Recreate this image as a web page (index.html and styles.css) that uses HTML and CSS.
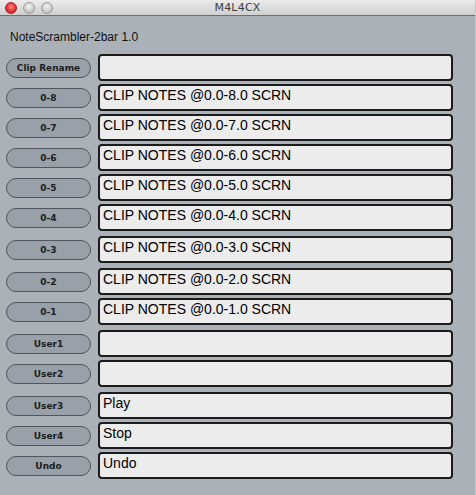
FILE: index.html
```html
<!DOCTYPE html>
<html>
<head>
<meta charset="utf-8">
<link rel="stylesheet" href="styles.css">
</head>
<body>
<div class="window">
  <div class="titlebar">
    <div class="lights">
      <span class="light light--close"></span>
      <span class="light"></span>
      <span class="light"></span>
    </div>
    <div class="title">M4L4CX</div>
  </div>
  <div class="content">
    <div class="header">NoteScrambler-2bar 1.0</div>
    <div class="rows">
      <div class="row"><span class="pill">Clip Rename</span><div class="field"></div></div>
      <div class="row"><span class="pill">0-8</span><div class="field">CLIP NOTES @0.0-8.0 SCRN</div></div>
      <div class="row"><span class="pill">0-7</span><div class="field">CLIP NOTES @0.0-7.0 SCRN</div></div>
      <div class="row"><span class="pill">0-6</span><div class="field">CLIP NOTES @0.0-6.0 SCRN</div></div>
      <div class="row"><span class="pill">0-5</span><div class="field">CLIP NOTES @0.0-5.0 SCRN</div></div>
      <div class="row"><span class="pill">0-4</span><div class="field">CLIP NOTES @0.0-4.0 SCRN</div></div>
      <div class="row row--wide"><span class="pill">0-3</span><div class="field">CLIP NOTES @0.0-3.0 SCRN</div></div>
      <div class="row row--wide"><span class="pill">0-2</span><div class="field">CLIP NOTES @0.0-2.0 SCRN</div></div>
      <div class="row"><span class="pill">0-1</span><div class="field">CLIP NOTES @0.0-1.0 SCRN</div></div>
      <div class="row row--wide"><span class="pill">User1</span><div class="field"></div></div>
      <div class="row"><span class="pill">User2</span><div class="field"></div></div>
      <div class="row row--wide"><span class="pill">User3</span><div class="field">Play</div></div>
      <div class="row"><span class="pill">User4</span><div class="field">Stop</div></div>
      <div class="row"><span class="pill">Undo</span><div class="field">Undo</div></div>
    </div>
  </div>
</div>
</body>
</html>
```
FILE: styles.css
```css
html, body {
  margin: 0;
  padding: 0;
  background: #aab1b9;
}
.window {
  width: 476px;
  height: 495px;
  background: #aab1b9;
  overflow: hidden;
  box-sizing: border-box;
  border-right: 1px solid #c3c8cd;
  font-family: "Liberation Sans", Arial, sans-serif;
}
.titlebar {
  height: 15px;
  border-bottom: 1px solid #6e6e6e;
  background: linear-gradient(#ececec, #cfcfcf);
  display: flex;
  align-items: center;
  position: relative;
}
.lights {
  display: flex;
  gap: 6px;
  padding-left: 5px;
}
.light {
  width: 12px;
  height: 12px;
  border-radius: 50%;
  box-sizing: border-box;
  border: 1px solid #9c9c9c;
  background: radial-gradient(circle at 50% 35%, #f4f4f4, #c2c2c2 70%);
}
.light--close {
  border-color: #a8282a;
  background: radial-gradient(circle at 50% 40%, #ff8a8a, #e0282c 60%, #b8171c);
}
.title {
  position: absolute;
  left: 0;
  right: 0;
  top: 1px;
  text-align: center;
  font-family: "DejaVu Sans", sans-serif;
  font-size: 11px;
  color: #3c3c3c;
  line-height: 13px;
  letter-spacing: 0.2px;
}
.content {
  padding: 0 0 0 6px;
}
.header {
  padding: 14px 0 0 4px;
  height: 14px;
  line-height: 14px;
  font-size: 12px;
  color: #111;
  margin-bottom: 10px;
}
.rows {
  display: flex;
  flex-direction: column;
  gap: 3px;
}
.row {
  display: flex;
  align-items: center;
  gap: 7px;
  height: 27px;
}
.row--wide {
  margin-top: 2px;
}
.pill {
  width: 85px;
  height: 20px;
  box-sizing: border-box;
  border: 1px solid #50565d;
  border-radius: 10px;
  background: #98a0a9;
  font-family: "DejaVu Sans", sans-serif;
  font-weight: bold;
  font-size: 9px;
  color: #1c1c1c;
  display: flex;
  align-items: center;
  justify-content: center;
}
.field {
  width: 355px;
  height: 27px;
  box-sizing: border-box;
  border: 2px solid #1b1b1b;
  border-radius: 4px;
  background: #ececec;
  font-size: 14px;
  line-height: 16px;
  padding: 1px 0 0 3px;
  color: #000;
  white-space: nowrap;
}
```
